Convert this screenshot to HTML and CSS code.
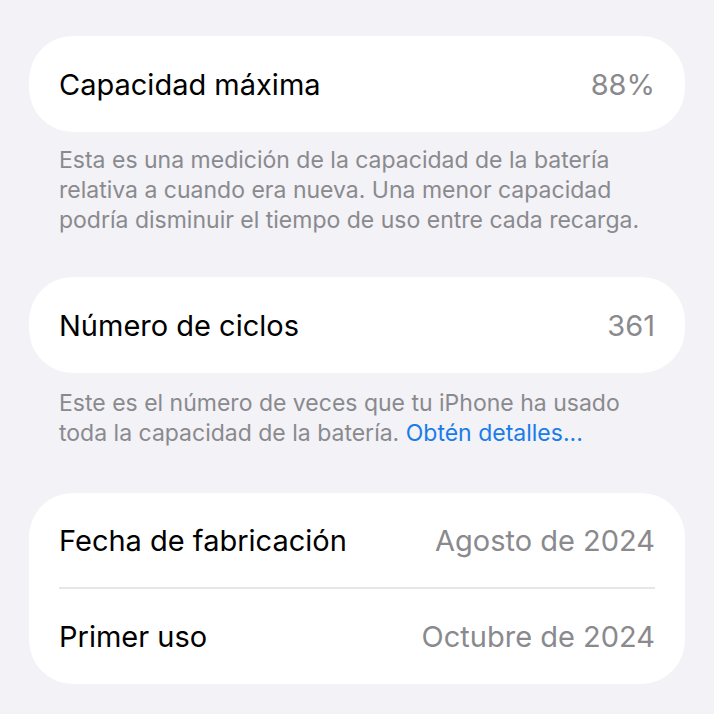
FILE: index.html
```html
<!DOCTYPE html>
<html lang="es">
<head>
  <meta charset="UTF-8" />
  <meta name="viewport" content="width=device-width, initial-scale=1.0"/>
  <title>Estado de la batería</title>
  <link rel="stylesheet" href="styles.css">
</head>
<body>
  <div class="page">
    <div class="group">
      <div class="row">
        <span class="label">Capacidad máxima</span>
        <span class="value">88%</span>
      </div>
    </div>
    <p class="footer">
      Esta es una medición de la capacidad de la batería<br>
      relativa a cuando era nueva. Una menor capacidad<br>
      podría disminuir el tiempo de uso entre cada recarga.
    </p>

    <div class="group">
      <div class="row">
        <span class="label">Número de ciclos</span>
        <span class="value">361</span>
      </div>
    </div>
    <p class="footer footer-link">
      Este es el número de veces que tu iPhone ha usado<br>
      toda la capacidad de la batería. <a href="#">Obtén detalles...</a>
    </p>

    <div class="group">
      <div class="row">
        <span class="label">Fecha de fabricación</span>
        <span class="value">Agosto de 2024</span>
      </div>
      <div class="row">
        <span class="label">Primer uso</span>
        <span class="value">Octubre de 2024</span>
      </div>
    </div>
  </div>
</body>
</html>
```

FILE: styles.css
```css
* {
  box-sizing: border-box;
}

body {
  margin: 0;
  background-color: #f2f2f7;
  font-family: Inter, "Noto Sans", sans-serif;
  color: #000;
}

.page {
  padding: 36px 29px 0;
}

.group {
  background-color: #fff;
  border-radius: 44px;
  padding: 0 30px;
}

.row {
  display: flex;
  justify-content: space-between;
  align-items: center;
  height: 96px;
  font-size: 29px;
}

/* grouped rows share the card, split by a hairline */
.row:not(:only-child) {
  height: 94px;
}

.row + .row {
  border-top: 2px solid #e5e5ea;
  height: 97px;
}

.value {
  color: #8a8a8e;
}

.footer {
  margin: 13px 30px 42px;
  font-size: 23px;
  line-height: 30px;
  color: #8a8a8e;
  white-space: nowrap;
}

.footer-link {
  margin: 15px 30px 45px;
}

.footer a {
  color: #1a7ce8;
  text-decoration: none;
}
```
